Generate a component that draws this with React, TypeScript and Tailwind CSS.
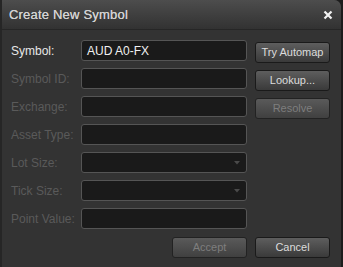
import { ReactNode } from "react"

const font = { fontFamily: '"Liberation Sans", Arial, sans-serif' }

const Btn = ({ children, disabled }: { children: ReactNode; disabled?: boolean }) => (
  <button
    className={
      disabled
        ? "w-[75px] h-[21px] rounded-[3px] border border-[#222222] bg-gradient-to-b from-[#5a5a5a] to-[#404040] text-[11px] text-[#7e7e7e] leading-none"
        : "w-[75px] h-[21px] rounded-[3px] border border-[#1a1a1a] bg-gradient-to-b from-[#5e5e5e] to-[#3a3a3a] text-[11px] text-[#dcdcdc] leading-none"
    }
  >
    {children}
  </button>
)

const Field = ({ value, select }: { value?: string; select?: boolean }) => (
  <div className="w-[166px] h-[21px] rounded-[3px] border border-[#555555] bg-[#1a1a1a] flex items-center justify-between px-[5px]">
    <span className="text-[12px] text-[#f0f0f0] leading-none">{value}</span>
    {select && (
      <svg width="6" height="4" viewBox="0 0 6 4" className="mr-[1px]">
        <path d="M0 0h6L3 3.5z" fill="#4a4a4a" />
      </svg>
    )}
  </div>
)

const rows = [
  { label: "Symbol:", value: "AUD A0-FX", active: true, btn: "Try Automap" },
  { label: "Symbol ID:", btn: "Lookup..." },
  { label: "Exchange:", btn: "Resolve", btnDisabled: true },
  { label: "Asset Type:" },
  { label: "Lot Size:", select: true },
  { label: "Tick Size:", select: true },
  { label: "Point Value:" },
]

const App = () => {
  return (
    <div className="w-[343px] h-[267px] bg-[#1c1c1c] overflow-hidden" style={font}>
      <div className="w-[341px] h-[267px] rounded-tr-[7px] border-l-2 border-[#262626] bg-[#333333] flex flex-col">
        <div className="h-[30px] rounded-tr-[7px] bg-gradient-to-b from-[#4d4d4d] to-[#323232] border-b border-[#262626] flex items-center justify-between pl-[7px] pr-[8px]">
          <span className="text-[13px] text-[#d2d2d2] tracking-[0.2px] [text-shadow:0_0_0.4px_#d2d2d2]">Create New Symbol</span>
          <svg width="10" height="10" viewBox="0 0 10 10">
            <path d="M1.5 1.5l7 7M8.5 1.5l-7 7" stroke="#f2f2f2" strokeWidth="2.2" />
          </svg>
        </div>

        <div className="flex flex-col gap-[7px] pt-[10px] pl-[9px]">
          {rows.map((row, index) => (
            <div key={index} className="flex items-center h-[21px]">
              <span
                className={
                  row.active
                    ? "w-[70px] text-[12px] text-[#e8e8e8]"
                    : "w-[70px] text-[12px] text-[#5a5a5a]"
                }
              >
                {row.label}
              </span>
              <Field value={row.value} select={row.select} />
              {row.btn && (
                <div className="ml-[8px]">
                  <Btn disabled={row.btnDisabled}>{row.btn}</Btn>
                </div>
              )}
            </div>
          ))}

          <div className="flex gap-[8px] pl-[161px] pt-[1px]">
            <Btn disabled>Accept</Btn>
            <Btn>Cancel</Btn>
          </div>
        </div>
      </div>
    </div>
  )
}

export default App
